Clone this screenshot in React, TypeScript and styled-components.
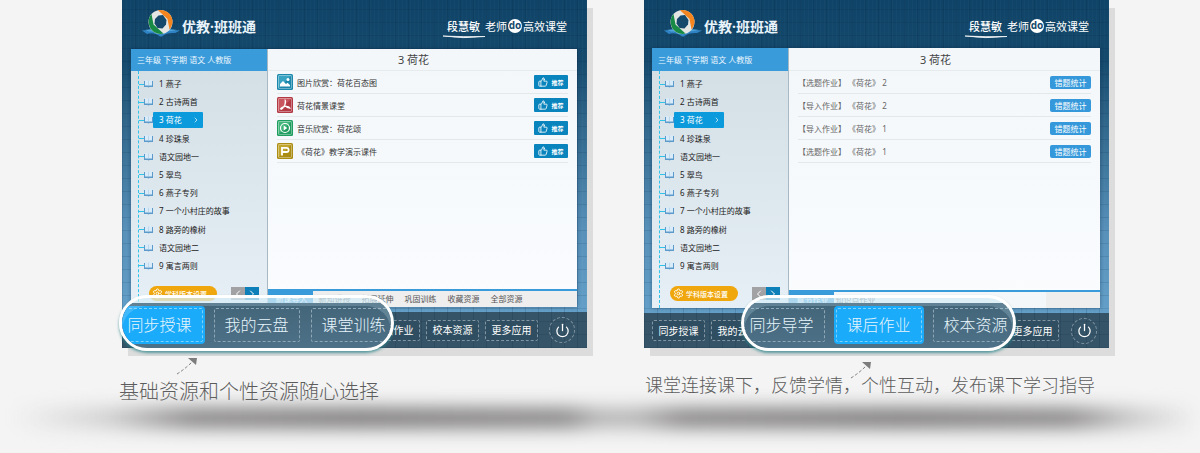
import React from "react";
import styled, { createGlobalStyle, css } from "styled-components";
import { ChevronLeft, ChevronRight, Power, Settings, ThumbsUp } from "lucide-react";

const GlobalStyle = createGlobalStyle`
  * { box-sizing: border-box; }
  body {
    margin: 0;
    background: #f4f4f4;
    font-family: "Noto Sans", "Noto Sans CJK SC", sans-serif;
  }
  button {
    margin: 0;
    padding: 0;
    border: 0;
    background: none;
    color: inherit;
    font: inherit;
    white-space: nowrap;
    cursor: pointer;
  }
  h1, h2, h3, p, ul { margin: 0; padding: 0; list-style: none; }
`;

const Page = styled.main`
  overflow: hidden;
  padding-bottom: 25px;
`;

const Showcase = styled.div`
  display: grid;
  grid-template-columns: minmax(465px, 1fr) minmax(465px, 1fr);
  gap: 57px;
  padding: 0 91px 0 122px;
`;

const Feature = styled.section`
  position: relative;
`;

const Screen = styled.div<{ $tall?: boolean }>`
  --head: ${(p) => (p.$tall ? 48 : 49)}px;
  --bar: ${(p) => (p.$tall ? 35 : 36)}px;
  --line: ${(p) => (p.$tall ? 23 : 22)}px;
  --inset: ${(p) => (p.$tall ? 8 : 9)}px;
  --foot: ${(p) => (p.$tall ? 7 : 6)}px;
  display: flex;
  flex-direction: column;
  background:
    repeating-linear-gradient(90deg, rgba(0, 20, 45, 0.13) 0 1px, transparent 1px 13px),
    repeating-linear-gradient(0deg, rgba(0, 20, 45, 0.1) 0 1px, transparent 1px 13px),
    repeating-linear-gradient(90deg, rgba(255, 255, 255, 0.02) 0 1px, transparent 1px 4px),
    linear-gradient(#0f4468 0, #154a6d 60px, #2f6589 120px, #5790b9 230px, #639fc8 312px);
  box-shadow: 6px 8px 0 #dcdcdc;
`;

const ScreenHead = styled.header`
  display: flex;
  justify-content: space-between;
  height: var(--head);
  padding: 8px 20px 0;
  color: #fff;
`;

const Brand = styled.div`
  display: flex;
  align-items: flex-start;
  gap: 2px;
`;

const BrandName = styled.h2`
  padding-top: 9px;
  font-size: 14px;
  font-weight: 700;
  line-height: 20px;
  color: #e9f4fb;
  white-space: nowrap;
`;

const Greeting = styled.p`
  display: flex;
  align-items: flex-start;
  gap: 1px;
  padding-top: 10px;
  font-size: 11px;
  line-height: 18px;
  white-space: nowrap;
`;

const Teacher = styled.strong`
  position: relative;
  margin-right: 4px;
  font-weight: 500;
`;

const Swash = styled.svg`
  position: absolute;
  left: -4px;
  bottom: -3px;
`;

const DoBadge = styled.span`
  width: 14px;
  height: 14px;
  margin-top: 1px;
  border-radius: 50%;
  background: #fff;
  color: #14496c;
  font-size: 10px;
  font-weight: 700;
  line-height: 13px;
  text-align: center;
`;

const Panel = styled.div`
  display: grid;
  grid-template-columns: 137px 1fr;
  margin: 0 calc(var(--inset) + 1px) 5px var(--inset);
  background: #f6f9fc;
  box-shadow: 0 0 4px rgba(0, 30, 60, 0.4);
`;

const Sidebar = styled.nav`
  border-right: 1px solid #a9b9c4;
  background: linear-gradient(#d2dde4, #dce6ed 50%, #e6eff6);
`;

const BookTitle = styled.h3`
  height: var(--line);
  padding-left: 6px;
  background: #3a9bda;
  color: #eef8ff;
  font-size: 8px;
  font-weight: 400;
  line-height: var(--line);
  white-space: nowrap;
`;

const Tree = styled.div`
  margin-left: 7px;
  padding: 4px 0 var(--foot);
  border-left: 1px dashed #2fc3ea;
`;

const LessonList = styled.ul`
  display: grid;
  grid-auto-rows: 1fr;
  height: 200px;
`;

const LessonItem = styled.li`
  display: flex;
  align-items: center;
  &::before {
    content: "";
    width: 5px;
    border-top: 1px dashed #2fc3ea;
  }
`;

const Lesson = styled.button<{ $active?: boolean }>`
  display: flex;
  align-items: center;
  height: 16px;
  padding-left: 6px;
  color: #222;
  font-size: 8px;
  line-height: 16px;
  ${(p) =>
    p.$active &&
    css`
      justify-content: space-between;
      width: 50px;
      padding-right: 3px;
      border-radius: 1px;
      background: #0b9adb;
      color: #fff;
    `}
`;

const TreeFoot = styled.div`
  display: flex;
  align-items: center;
  justify-content: space-between;
  padding: 11px 8px 0 10px;
`;

const SettingsPill = styled.button`
  display: flex;
  align-items: center;
  gap: 2px;
  width: 68px;
  height: 15px;
  padding-left: 3px;
  border-radius: 8px;
  background: #f0a70d;
  color: #fff;
  font-size: 7px;
  font-weight: 500;
`;

const Pager = styled.div`
  display: flex;
  color: #fff;
`;

const PageButton = styled.button<{ $next?: boolean }>`
  display: flex;
  align-items: center;
  justify-content: center;
  width: 14px;
  height: 13px;
  background: ${(p) => (p.$next ? "#0d80ba" : "#a2a2a4")};
`;

const Content = styled.div`
  display: flex;
  flex-direction: column;
  background: linear-gradient(#f3f7fa, #fafcfe);
`;

const LessonTitle = styled.h3`
  height: var(--line);
  padding-right: 18px;
  border-bottom: 1px solid #e6ebee;
  color: #444;
  font-size: 11px;
  font-weight: 400;
  line-height: var(--line);
  text-align: center;
`;

const Rows = styled.ul`
  flex: 1;
  padding: 0 9px;
`;

const Row = styled.li`
  display: flex;
  align-items: center;
  gap: 4px;
  height: 23px;
  border-bottom: 1px solid #e3e8eb;
  color: #444;
  font-size: 8px;
  white-space: pre;
`;

const RowName = styled.span<{ $muted?: boolean }>`
  flex: 1;
  color: ${(p) => (p.$muted ? "#666" : "#333")};
`;

const RecommendButton = styled.button`
  display: flex;
  align-items: center;
  justify-content: center;
  gap: 3px;
  width: 34px;
  height: 14px;
  border-radius: 1px;
  background: #0a84bd;
  color: #fff;
  font-size: 6px;
  font-weight: 700;
`;

const StatsButton = styled.button`
  width: 41px;
  height: 13px;
  border-radius: 2px;
  background: #3498da;
  color: #fff;
  font-size: 8px;
  line-height: 13px;
`;

const Tabs = styled.div<{ $plain?: boolean }>`
  display: flex;
  height: 18px;
  border-top: 2px solid #3a9bda;
  background: ${(p) => (p.$plain ? "linear-gradient(90deg, #f4f7f9 257px, #eee 257px)" : "#eeeeef")};
`;

const Tab = styled.button<{ $active?: boolean }>`
  flex: 0 0 ${(p) => (p.$active ? 45 : 43)}px;
  padding-left: ${(p) => (p.$active ? 2 : 0)}px;
  background: ${(p) => (p.$active ? "#3a9bda" : "none")};
  color: ${(p) => (p.$active ? "#fff" : "#555")};
  font-size: 8px;
  line-height: 14px;
  text-align: center;
`;

const BottomBar = styled.nav`
  display: flex;
  align-items: center;
  gap: 6px;
  height: var(--bar);
  padding: 0 12px 0 var(--inset);
  background:
    repeating-linear-gradient(90deg, rgba(0, 20, 40, 0.13) 0 1px, transparent 1px 13px),
    repeating-linear-gradient(0deg, rgba(0, 20, 40, 0.1) 0 1px, transparent 1px 13px),
    #355468;
  color: #fff;
`;

const BarButton = styled.button`
  width: 53px;
  height: 21px;
  border: 1px dashed #8195a2;
  border-radius: 2px;
  background: #304e61;
  font-size: 10px;
  line-height: 18px;
`;

const BarGap = styled.span`
  width: 230px;
`;

const PowerButton = styled.button`
  display: flex;
  align-items: center;
  justify-content: center;
  width: 26px;
  height: 26px;
  margin-left: auto;
  border: 1px dashed #8195a2;
  border-radius: 50%;
`;

const Lens = styled.div<{ $x: number }>`
  position: absolute;
  top: 295px;
  left: ${(p) => p.$x}px;
  display: flex;
  justify-content: center;
  gap: 7px;
  width: 275px;
  height: 56px;
  padding-top: 8px;
  overflow: hidden;
  border: 3px solid #fff;
  border-radius: 28px;
  background: linear-gradient(rgba(220, 239, 246, 0.65) 5px, #436579 5px, #4d7188);
  background-clip: padding-box;
  box-shadow: 0 2px 3px rgba(40, 130, 135, 0.75);
  color: #e6f5fc;
  &::after {
    content: "";
    position: absolute;
    inset: 0;
    border-radius: 25px;
    box-shadow: inset 0 8px 0 rgba(200, 230, 245, 0.22);
    pointer-events: none;
  }
`;

const LensButton = styled.button<{ $active?: boolean }>`
  flex: 0 0 90px;
  height: 38px;
  border-radius: 4px;
  outline: 1px dashed ${(p) => (p.$active ? "#7fd0fb" : "#8fa6b4")};
  outline-offset: -3px;
  background: ${(p) => (p.$active ? "#1aabfb" : "none")};
  font-size: 16px;
  font-weight: 300;
  line-height: 36px;
`;

const Caption = styled.p<{ $long?: boolean }>`
  position: relative;
  margin: ${(p) => (p.$long ? "25px 0 0 1px" : "32px 0 0 -3px")};
  color: #5c5c5c;
  font-size: ${(p) => (p.$long ? 18 : 20)}px;
  font-weight: 300;
  line-height: 24px;
  white-space: nowrap;
`;

const Pointer = styled.svg<{ $x: number; $y: number }>`
  position: absolute;
  left: ${(p) => p.$x}px;
  top: ${(p) => p.$y}px;
`;

const Ground = styled.div`
  height: 20px;
  margin-top: 4px;
  filter: blur(9px);
  background: linear-gradient(
    90deg,
    transparent 1%,
    #cfcece 9%,
    #848283 16%,
    #787677 30%,
    #848283 47%,
    #b4b3b3 50%,
    #b4b3b3 53%,
    #848283 57%,
    #787677 75%,
    #848283 89%,
    #c4c3c3 94%,
    transparent 100%
  );
`;

const LogoMark = () => (
  <svg width="38" height="29" viewBox="0 0 38 29" aria-hidden="true">
    <path d="M0 22.5 C6 22 12 22 19 27 C26 22 32 22 38 22.5 L33 25 C28 24.500 23 25.500 20 28.5 H18 C14 25.500 9 24.500 5 26 Z" fill="#2f83c4" />
    <path d="M3 22 C11 20.500 15 21.500 19 25 C23 21.500 27 20.500 35 22 L30 23 C26 23 22 24 19 27 C15 24 11 23 7 23.500 Z" fill="#4ea3dc" />
    <circle cx="18.5" cy="14" r="12" fill="#e4e6e4" />
    <path d="M16 2.2 C25 1 31 7.500 30.500 14.500 C30.200 17 29 19.500 27.500 21.500 L25.500 11 Z" fill="#f5851f" />
    <path d="M9.500 6 C5 11 6 20 12 24 C15 26 19 26.500 21.500 25.500 L11.500 16.500 Z" fill="#178a45" />
    <path d="M16.500 7.500 L21 7 L24.500 12 L24 16.500 L20.500 20.500 L15.500 20 L12.500 15.500 L13 11 Z" fill="#14496c" />
  </svg>
);

const BookIcon = () => (
  <svg width="9" height="8" viewBox="0 0 9 8" aria-hidden="true">
    <path d="M0 1 H9 V7 H5.500 L4.500 7.600 L3.500 7 H0 Z" fill="#5b9aca" />
    <path d="M1 0 L4.500 0.600 L8 0 V5.600 H1 Z" fill="#d9ebf8" />
    <path d="M4.500 0.600 V5.600" stroke="#a9c9e2" strokeWidth=".6" />
  </svg>
);

type Kind = "picture" | "pdf" | "audio" | "slides";

const kindColors: Record<Kind, [string, string]> = {
  picture: ["#1d87ab", "#4cb6d0"],
  pdf: ["#b23a45", "#d8686f"],
  audio: ["#1f9c60", "#58c48c"],
  slides: ["#ab8c14", "#d2b53c"],
};

const KindIcon = ({ kind }: { kind: Kind }) => {
  const [dark, light] = kindColors[kind];
  return (
    <svg width="16" height="16" viewBox="0 0 16 16" aria-hidden="true">
      <rect width="16" height="16" rx="1.500" fill={dark} />
      <path d="M1 1 H15 L1 15 Z" fill={light} opacity=".6" />
      <rect x="1.500" y="1.500" width="13" height="13" rx="1" fill="none" stroke="#fff" strokeOpacity=".45" strokeWidth=".8" />
      {kind === "picture" && (
        <g fill="#fff">
          <circle cx="11" cy="5.500" r="1.500" />
          <path d="M3 12.500 V10 L6 7 L9 10 L10.500 8.800 L13 11 V12.500 Z" />
        </g>
      )}
      {kind === "pdf" && (
        <path
          d="M7.600 3 C8.800 3 8.400 6 7.800 8 C6.600 10.500 5 12.300 3.500 12.300 M3.500 12.300 C4 10.800 6 9.800 8.200 9.400 C10.500 9.200 12.300 9.800 12.800 11 C11 11 9.500 10.300 8.400 8.800"
          fill="none"
          stroke="#fff"
          strokeWidth="1.400"
        />
      )}
      {kind === "audio" && (
        <g>
          <circle cx="8" cy="8" r="4.500" fill="none" stroke="#fff" strokeWidth="1.200" />
          <path d="M6.700 5.500 L10.300 8 L6.700 10.500 Z" fill="#fff" />
        </g>
      )}
      {kind === "slides" && (
        <path d="M5 12.500 V4.800 H9.500 C12.300 4.800 12.300 9 9.500 9 H5" fill="none" stroke="#fff" strokeWidth="1.800" />
      )}
    </svg>
  );
};

const Arrow = ({ x, y }: { x: number; y: number }) => (
  <Pointer $x={x} $y={y} width="24" height="20" viewBox="0 0 24 20" aria-hidden="true">
    <path d="M2 18 Q10 13 17 6" fill="none" stroke="#7d7d7d" strokeDasharray="3 2" />
    <path d="M13 2 L22 2 L21 9 Z" fill="#7d7d7d" />
  </Pointer>
);

const lessons = [
  "1 燕子",
  "2 古诗两首",
  "3 荷花",
  "4 珍珠泉",
  "语文园地一",
  "5 翠鸟",
  "6 燕子专列",
  "7 一个小村庄的故事",
  "8 路旁的橡树",
  "语文园地二",
  "9 寓言两则",
];

const resources: { kind: Kind; name: string }[] = [
  { kind: "picture", name: "图片欣赏：荷花百态图" },
  { kind: "pdf", name: "荷花情景课堂" },
  { kind: "audio", name: "音乐欣赏：荷花颂" },
  { kind: "slides", name: "《荷花》教学演示课件" },
];

const homework = [
  "【选题作业】 《荷花》 2",
  "【导入作业】 《荷花》 2",
  "【导入作业】 《荷花》 1",
  "【选题作业】 《荷花》 1",
];

interface ClassroomProps {
  tall?: boolean;
  tabs: string[];
  // Bar entries on either side of the stretch that the lens covers.
  before: string[];
  after: string[];
  children: React.ReactNode;
}

const Classroom = ({ tall, tabs, before, after, children }: ClassroomProps) => (
  <Screen $tall={tall}>
    <ScreenHead>
      <Brand>
        <LogoMark />
        <BrandName>优教·班班通</BrandName>
      </Brand>
      <Greeting>
        <Teacher>
          段慧敏
          <Swash width="42" height="4" viewBox="0 0 42 4" aria-hidden="true">
            <path d="M0 1 Q20 4 42 1.500 Q20 2 0 1 Z" fill="#fff" stroke="#fff" strokeWidth=".7" />
          </Swash>
        </Teacher>
        <span>老师</span>
        <DoBadge>do</DoBadge>
        <span>高效课堂</span>
      </Greeting>
    </ScreenHead>
    <Panel>
      <Sidebar>
        <BookTitle>三年级 下学期 语文 人教版</BookTitle>
        <Tree>
          <LessonList>
            {lessons.map((name) => (
              <LessonItem key={name}>
                <BookIcon />
                <Lesson $active={name === "3 荷花"}>
                  {name}
                  {name === "3 荷花" && <ChevronRight size={8} />}
                </Lesson>
              </LessonItem>
            ))}
          </LessonList>
          <TreeFoot>
            <SettingsPill>
              <Settings size={11} />
              学科版本设置
            </SettingsPill>
            <Pager>
              <PageButton aria-label="上一页">
                <ChevronLeft size={12} />
              </PageButton>
              <PageButton $next aria-label="下一页">
                <ChevronRight size={12} />
              </PageButton>
            </Pager>
          </TreeFoot>
        </Tree>
      </Sidebar>
      <Content>
        <LessonTitle>3 荷花</LessonTitle>
        <Rows>{children}</Rows>
        <Tabs $plain={tall}>
          {tabs.map((tab, i) => (
            <Tab key={tab} $active={i === 0}>
              {tab}
            </Tab>
          ))}
        </Tabs>
      </Content>
    </Panel>
    <BottomBar>
      {before.map((app) => (
        <BarButton key={app}>{app}</BarButton>
      ))}
      <BarGap />
      {after.map((app) => (
        <BarButton key={app}>{app}</BarButton>
      ))}
      <PowerButton aria-label="退出">
        <Power size={15} strokeWidth={2} />
      </PowerButton>
    </BottomBar>
  </Screen>
);

export default function App() {
  return (
    <Page>
      <GlobalStyle />
      <Showcase>
        <Feature>
          <Classroom
            tabs={["新课导入", "新知讲授", "拓展延伸", "巩固训练", "收藏资源", "全部资源"]}
            before={[]}
            after={["课后作业", "校本资源", "更多应用"]}
          >
            {resources.map((item) => (
              <Row key={item.name}>
                <KindIcon kind={item.kind} />
                <RowName>{item.name}</RowName>
                <RecommendButton>
                  <ThumbsUp size={10} strokeWidth={2} />
                  推荐
                </RecommendButton>
              </Row>
            ))}
          </Classroom>
          <Lens $x={-3}>
            <LensButton $active>同步授课</LensButton>
            <LensButton>我的云盘</LensButton>
            <LensButton>课堂训练</LensButton>
          </Lens>
          <Caption>
            <Arrow x={56} y={-24} />
            基础资源和个性资源随心选择
          </Caption>
        </Feature>
        <Feature>
          <Classroom
            tall
            tabs={["章节作业", "知识点作业"]}
            before={["同步授课", "我的云盘"]}
            after={["更多应用"]}
          >
            {homework.map((name, i) => (
              <Row key={i}>
                <RowName $muted>{name}</RowName>
                <StatsButton>错题统计</StatsButton>
              </Row>
            ))}
          </Classroom>
          <Lens $x={97}>
            <LensButton>同步导学</LensButton>
            <LensButton $active>课后作业</LensButton>
            <LensButton>校本资源</LensButton>
          </Lens>
          <Caption $long>
            <Arrow x={204} y={-13} />
            课堂连接课下，反馈学情，个性互动，发布课下学习指导
          </Caption>
        </Feature>
      </Showcase>
      <Ground />
    </Page>
  );
}
